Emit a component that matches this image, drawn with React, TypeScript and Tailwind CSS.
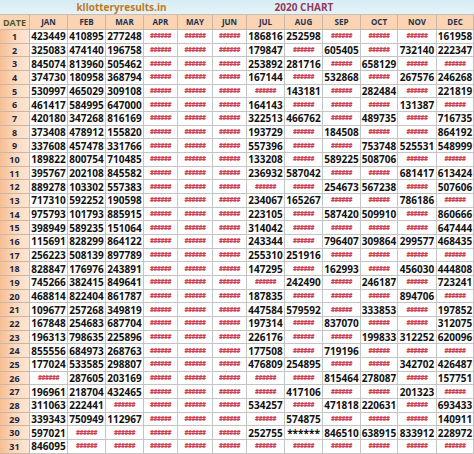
const months = ["JAN", "FEB", "MAR", "APR", "MAY", "JUN", "JUL", "AUG", "SEP", "OCT", "NOV", "DEC"];

// one line per date, JAN..DEC, "-" = no draw
const chart = `
423449 410895 277248 - - - 186816 252598 - - - 161958
325083 474140 196758 - - - 179847 - 605405 - 732140 222347
845074 813960 505462 - - - 253892 281716 - 658129 - -
374730 180958 368794 - - - 167144 - 532868 - 267576 246268
530997 465029 309108 - - - - 143181 - 282484 - 221819
461417 584995 647000 - - - 164143 - - - 131387 -
420180 347268 816169 - - - 322513 466762 - 489735 - 716735
373408 478912 155820 - - - 193729 - 184508 - - 864192
337608 457478 331766 - - - 557396 - - 753748 525531 548999
189822 800754 710485 - - - 133208 - 589225 508706 - -
395767 202108 845582 - - - 236932 587042 - - 681417 613424
889278 103302 557383 - - - - - 254673 567238 - 507606
717310 592252 190598 - - - 234067 165267 - - 786186 -
975793 101793 885915 - - - 223105 - 587420 509910 - 860666
398949 589235 151064 - - - 314042 - - - - 647444
115691 828299 864122 - - - 243344 - 796407 309864 299577 468435
256223 508139 897789 - - - 255310 251916 - - - -
828847 176976 243891 - - - 147295 - 162993 - 456030 444808
745266 382415 849641 - - - - 242490 - 246187 - 723241
468814 822404 861787 - - - 187835 - - - 894706 -
109677 257268 349819 - - - 447584 579592 - 333853 - 197852
167848 254683 687704 - - - 197314 - 837070 - - 312075
196313 798635 225896 - - - 226176 - - 199833 312252 620096
855556 684973 268763 - - - 177508 - 719196 - - -
177024 533585 298807 - - - 476809 254895 - - 342702 426487
- 287605 203169 - - - - - 815464 278087 - 157751
196961 218704 432465 - - - - 417106 - - 201323 -
311063 222441 - - - - 534257 - 471818 220631 - 693433
339343 750949 112967 - - - - 574875 - - - 140911
597021 - - - - - 252755 ****** 846510 638915 833912 228972
846095 - - - - - - - - - - -
`
  .trim()
  .split("\n")
  .map((line) => line.split(" "));

const cols =
  "grid grid-cols-[30px_38px_38px_38px_34px_35px_34px_38px_38px_38px_37px_39px_37px]";

// excel's overflow marks, shown small and red
function Dash() {
  return (
    <span className="text-[6px] font-extrabold leading-none tracking-[-0.5px] text-[#cc3f52]">
      ######
    </span>
  );
}

export default function App() {
  return (
    <div className="w-[474px] h-[454px] overflow-hidden bg-white font-['Open_Sans',sans-serif]">
      {/* title bar */}
      <div
        className={`${cols} h-[15px] bg-gradient-to-b from-[#d6ecf4] to-[#e6f3f8] border-b border-[#bfbfbf]`}
      >
        <div />
        <div className="col-span-5 flex items-center justify-center text-[10px] font-bold leading-none text-[#c4781e]">
          kllotteryresults.in
        </div>
        <div />
        <div className="col-span-3 flex items-center justify-center text-[10px] font-bold leading-none text-[#943a5c]">
          2020 CHART
        </div>
      </div>

      {/* month header */}
      <div className={`${cols} h-[15px] bg-[#fbd4b4]`}>
        <div className="flex items-center justify-center border-r border-b border-[#c9b6a6] text-[9px] font-bold leading-none text-[#4f5a24]">
          DATE
        </div>
        {months.map((m) => (
          <div
            key={m}
            className="flex items-center justify-center border-r border-b border-[#c9b6a6] text-[8px] font-bold leading-none text-[#1f3150]"
          >
            {m}
          </div>
        ))}
      </div>

      {/* results */}
      {chart.map((row, i) => (
        <div key={i} className={`${cols} h-[13.68px]`}>
          <div className="flex items-center justify-center border-r border-b border-[#c9b6a6] bg-gradient-to-r from-[#f6bd92] via-[#fcd9bd] to-[#fde6d4] text-[9px] font-bold leading-none text-[#1c2640]">
            {i + 1}
          </div>
          {row.map((v, j) => (
            <div
              key={j}
              className="flex items-center justify-center border-r border-b border-[#c4c4c4] text-[10px] font-bold leading-none text-[#111]"
            >
              {v === "-" ? <Dash /> : v}
            </div>
          ))}
        </div>
      ))}
    </div>
  );
}
